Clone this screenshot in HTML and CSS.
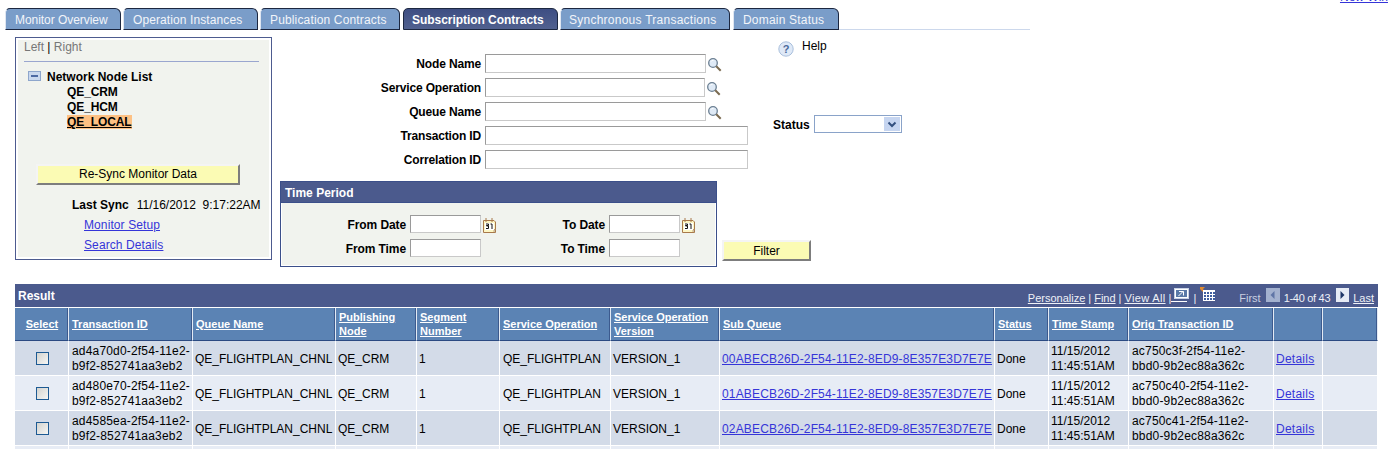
FILE: index.html
```html
<!DOCTYPE html>
<html lang="en">
<head>
<meta charset="utf-8">
<title>Subscription Contracts</title>
<link rel="stylesheet" href="styles.css">
</head>
<body>
<svg class="defs" width="0" height="0" aria-hidden="true">
  <symbol id="lens" viewBox="0 0 15 15">
    <circle cx="6" cy="6" r="4.3" fill="#dfeaf6" stroke="#6b7f92" stroke-width="1.3"/>
    <path d="M4 4.6a2.6 2.6 0 0 1 2.6-1.4" fill="none" stroke="#fff" stroke-width="1"/>
    <path d="M9.3 9.3l4.4 4.4" stroke="#7a6a50" stroke-width="2"/>
  </symbol>
  <symbol id="cal" viewBox="0 0 13 15">
    <path d="M.5 2.5h10.5l1.5 1.5v10.500h-12z" fill="#fdf6c4" stroke="#a8794a"/>
    <path d="M11 14.500v-3h1.500" fill="#ccc" stroke="#a8794a" stroke-width=".6"/>
    <path d="M3 0v4M9 0v4" stroke="#a8794a"/>
    <rect x="2" y="5" width="9" height="7" fill="#fff"/>
    <path d="M3 6h2.500v1.500h-2v.5h2v2.500h-2.500M7.500 6h1.500v5" fill="none" stroke="#111"/>
  </symbol>
</svg>

<div class="topbar"><a class="link" href="#">New Window</a></div>

<nav class="tabs">
  <a class="tab tab-1" href="#">Monitor Overview</a>
  <a class="tab tab-2" href="#">Operation Instances</a>
  <a class="tab tab-3" href="#">Publication Contracts</a>
  <a class="tab tab-4 tab-active" href="#">Subscription Contracts</a>
  <a class="tab tab-5" href="#">Synchronous Transactions</a>
  <a class="tab tab-6" href="#">Domain Status</a>
  <span class="tab-rest"></span>
</nav>

<section class="top">
  <aside class="panel">
    <div class="side-switch">Left <span class="pipe">|</span> Right</div>
    <div class="tree-head">
      <svg class="minus" width="13" height="10" viewBox="0 0 13 10"><rect x=".5" y=".5" width="12" height="9" fill="#c9d8ee" stroke="#8ea6cc"/><rect x="3" y="4" width="7" height="2" fill="#4d6aa3"/></svg>
      <b>Network Node List</b>
    </div>
    <ul class="nodes">
      <li>QE_CRM</li>
      <li>QE_HCM</li>
      <li><span class="node-current">QE_LOCAL</span></li>
    </ul>
    <button class="btn btn-sync" type="button">Re-Sync Monitor Data</button>
    <div class="last-sync"><b>Last Sync</b><span>11/16/2012&nbsp; 9:17:22AM</span></div>
    <a class="link panel-link" href="#">Monitor Setup</a>
    <a class="link panel-link" href="#">Search Details</a>
  </aside>

  <div class="main">
    <div class="upper">
      <div class="fields">
        <div class="field"><label>Node Name</label><input class="in-mid" type="text"><svg class="lens"><use href="#lens"/></svg></div>
        <div class="field"><label>Service Operation</label><input class="in-mid-s" type="text"><svg class="lens"><use href="#lens"/></svg></div>
        <div class="field"><label>Queue Name</label><input class="in-mid" type="text"><svg class="lens"><use href="#lens"/></svg></div>
        <div class="field"><label>Transaction ID</label><input class="in-long" type="text"></div>
        <div class="field"><label>Correlation ID</label><input class="in-long" type="text"></div>
      </div>
      <div class="side">
        <div class="help">
          <svg width="16" height="17" viewBox="0 0 16 17"><circle cx="8" cy="9" r="7.200" fill="#dfe9f7" stroke="#a9bfdc"/><text x="8" y="13" class="help-mark">?</text></svg>
          <span>Help</span>
        </div>
        <div class="status">
          <b>Status</b>
          <span class="select"><span class="select-btn"><svg width="10" height="7" viewBox="0 0 10 7"><path d="M1.500 1.500l3.500 3.500 3.500-3.500" fill="none" stroke="#33507f" stroke-width="2"/></svg></span></span>
        </div>
      </div>
    </div>
    <div class="lower">
      <div class="timebox">
        <div class="timebox-title">Time Period</div>
        <div class="time-rows">
          <div class="time-row">
            <div class="tf tf-a"><label>From Date</label><input type="text"><svg class="cal"><use href="#cal"/></svg></div>
            <div class="tf tf-b"><label>To Date</label><input type="text"><svg class="cal"><use href="#cal"/></svg></div>
          </div>
          <div class="time-row">
            <div class="tf tf-a"><label>From Time</label><input type="text"></div>
            <div class="tf tf-b"><label>To Time</label><input type="text"></div>
          </div>
        </div>
      </div>
      <button class="btn btn-filter" type="button">Filter</button>
    </div>
  </div>
</section>

<section class="grid">
  <div class="grid-title">
    <b>Result</b>
    <div class="grid-nav">
      <a href="#">Personalize</a><i>|</i><a href="#">Find</a><i>|</i><a class="view-all" href="#">View All</a><i class="tight">|</i>
      <svg class="ic-zoom" width="18" height="14" viewBox="0 0 18 14"><rect x="3.500" y=".5" width="14" height="10" fill="#fff" stroke="#c8d2e6"/><rect x="5" y="2" width="11" height="7" fill="#5b7aa8"/><path d="M8 3.500h4.500v4M12 3.500l-4.500 4.500" stroke="#fff" fill="none"/><path d="M0 13.500h16" stroke="#fff"/></svg>
      <i class="wide">|</i>
      <svg class="ic-grid" width="15" height="15" viewBox="0 0 15 15"><path d="M0 0l5 0-2 2 2 3-2 0-3-3z" fill="#e08a30"/><rect x="3" y="3" width="12" height="11" fill="#fff"/><path d="M4 5h2v2h-2zM7 5h2v2h-2zM10 5h2v2h-2zM13 5h2v2h-2zM4 8h2v2h-2zM7 8h2v2h-2zM10 8h2v2h-2zM13 8h2v2h-2zM4 11h2v2h-2zM7 11h2v2h-2zM10 11h2v2h-2zM13 11h2v2h-2z" fill="#3f5fa0"/></svg>
      <span class="first">First</span>
      <svg class="ic-nav" width="14" height="14" viewBox="0 0 14 14"><rect width="14" height="14" fill="#a3b1cf"/><path d="M8.500 3v8l-4-4z" fill="#5f75a6"/></svg>
      <span class="count">1-40 of 43</span>
      <svg class="ic-nav ic-next" width="13" height="14" viewBox="0 0 13 14"><rect width="13" height="14" fill="#e6ebf5"/><path d="M4.500 3v8l4-4z" fill="#1f3768"/></svg>
      <a href="#">Last</a>
    </div>
  </div>
  <table class="results">
    <colgroup>
      <col class="c1"><col class="c2"><col class="c3"><col class="c4"><col class="c5"><col class="c6"><col class="c7"><col class="c8"><col class="c9"><col class="c10"><col class="c11"><col class="c12"><col class="c13">
    </colgroup>
    <thead>
      <tr>
        <th class="th-center"><a href="#">Select</a></th>
        <th><a href="#">Transaction ID</a></th>
        <th><a href="#">Queue Name</a></th>
        <th><a href="#">Publishing<br>Node</a></th>
        <th><a href="#">Segment<br>Number</a></th>
        <th><a href="#">Service Operation</a></th>
        <th><a href="#">Service Operation<br>Version</a></th>
        <th><a href="#">Sub Queue</a></th>
        <th><a href="#">Status</a></th>
        <th><a href="#">Time Stamp</a></th>
        <th><a href="#">Orig Transaction ID</a></th>
        <th></th>
        <th></th>
      </tr>
    </thead>
    <tbody>
      <tr>
        <td class="td-center"><span class="check"></span></td>
        <td class="id">ad4a70d0-2f54-11e2-<br>b9f2-852741aa3eb2</td>
        <td>QE_FLIGHTPLAN_CHNL</td>
        <td>QE_CRM</td>
        <td>1</td>
        <td class="op">QE_FLIGHTPLAN</td>
        <td>VERSION_1</td>
        <td class="sub"><a class="link" href="#">00ABECB26D-2F54-11E2-8ED9-8E357E3D7E7E</a></td>
        <td>Done</td>
        <td>11/15/2012<br>11:45:51AM</td>
        <td class="id">ac750c3f-2f54-11e2-<br>bbd0-9b2ec88a362c</td>
        <td class="det"><a class="link" href="#">Details</a></td>
        <td></td>
      </tr>
      <tr class="alt">
        <td class="td-center"><span class="check"></span></td>
        <td class="id">ad480e70-2f54-11e2-<br>b9f2-852741aa3eb2</td>
        <td>QE_FLIGHTPLAN_CHNL</td>
        <td>QE_CRM</td>
        <td>1</td>
        <td class="op">QE_FLIGHTPLAN</td>
        <td>VERSION_1</td>
        <td class="sub"><a class="link" href="#">01ABECB26D-2F54-11E2-8ED9-8E357E3D7E7E</a></td>
        <td>Done</td>
        <td>11/15/2012<br>11:45:51AM</td>
        <td class="id">ac750c40-2f54-11e2-<br>bbd0-9b2ec88a362c</td>
        <td class="det"><a class="link" href="#">Details</a></td>
        <td></td>
      </tr>
      <tr>
        <td class="td-center"><span class="check"></span></td>
        <td class="id">ad4585ea-2f54-11e2-<br>b9f2-852741aa3eb2</td>
        <td>QE_FLIGHTPLAN_CHNL</td>
        <td>QE_CRM</td>
        <td>1</td>
        <td class="op">QE_FLIGHTPLAN</td>
        <td>VERSION_1</td>
        <td class="sub"><a class="link" href="#">02ABECB26D-2F54-11E2-8ED9-8E357E3D7E7E</a></td>
        <td>Done</td>
        <td>11/15/2012<br>11:45:51AM</td>
        <td class="id">ac750c41-2f54-11e2-<br>bbd0-9b2ec88a362c</td>
        <td class="det"><a class="link" href="#">Details</a></td>
        <td></td>
      </tr>
      <tr class="alt">
        <td></td><td></td><td></td><td></td><td></td><td></td><td></td><td></td><td></td><td></td><td></td><td></td><td></td>
      </tr>
    </tbody>
  </table>
</section>
</body>
</html>
```
FILE: styles.css
```css
html, body { margin: 0; padding: 0; height: 449px; overflow: hidden; background: #fff; }
body { font: 12px/15px "Liberation Sans", Arial, sans-serif; color: #000; }
.defs { display: block; height: 0; }
a { color: inherit; }
.link { color: #3535d8; text-decoration: underline; }

.topbar { height: 3px; overflow: hidden; display: flex; justify-content: flex-end; align-items: flex-end; }
.topbar .link { flex: none; margin-right: -22px; line-height: 11px; }

.tabs { display: flex; align-items: flex-end; margin: 5px 0 0 5px; width: 1025px; height: 22px; }
.tab { flex: none; box-sizing: border-box; height: 22px; padding: 3px 0 0 9px; background: #7a9dc9; color: #f2f5fa; text-decoration: none; white-space: nowrap; border: 1px solid #1c2740; border-left-color: #dfe6f1; border-radius: 5px 6px 0 0; line-height: 17px; }
.tab-1 { width: 116px; margin-right: 2px; letter-spacing: -.05px; }
.tab-2 { width: 135px; margin-right: 2px; letter-spacing: .1px; }
.tab-3 { width: 140px; margin-right: 3px; letter-spacing: .15px; }
.tab-4 { width: 155px; margin-right: 2px; padding-left: 8px; letter-spacing: -.05px; }
.tab-5 { width: 170px; margin-right: 3px; padding-left: 8px; letter-spacing: .25px; }
.tab-6 { width: 106px; letter-spacing: .2px; }
.tab-active { background: linear-gradient(#3e4e83, #51618f); color: #fff; font-weight: bold; border-left-color: #1c2740; }
.tab-rest { flex: 1; border-bottom: 1px solid #ccd8ec; }

.top { display: flex; align-items: flex-start; margin: 7px 0 0 15px; }
.panel { box-sizing: border-box; width: 257px; height: 223px; padding: 0 12px 0 8px; background: #f1f3ee; border: 1px solid #4d5b8f; box-shadow: inset 0 0 0 2px #fff; display: flex; flex-direction: column; }
.side-switch { color: #777; height: 24px; line-height: 19px; box-sizing: border-box; border-bottom: 1px solid #9aa6cf; }
.pipe { color: #000; }
.tree-head { display: flex; align-items: center; gap: 6px; margin: 8px 0 0 4px; height: 15px; }
.minus { flex: none; margin-top: -4px; }
.nodes { list-style: none; margin: 0 0 0 43px; padding: 0; font-weight: bold; letter-spacing: -.1px; }
.nodes li { height: 15px; }
.node-current { background: #fdc184; text-decoration: underline; }
.btn { display: block; box-sizing: border-box; margin: 0; padding: 2px 0 0; font: 12px/15px "Liberation Sans", Arial, sans-serif; color: #000; background: #fbfbb4; border: 2px solid; border-color: #f4f4f4 #7d7d7d #7d7d7d #f4f4f4; }
.btn-sync { width: 204px; height: 21px; margin: 34px 0 0 12px; padding-top: 0; }
.last-sync { display: flex; gap: 8px; margin: 13px 0 0 48px; height: 15px; white-space: nowrap; }
.panel-link { display: block; margin: 5px 0 0 60px; height: 15px; letter-spacing: .1px; }

.main { margin-left: 8px; }
.upper { display: flex; align-items: flex-start; }
.fields { box-sizing: border-box; width: 468px; padding-top: 17px; display: flex; flex-direction: column; gap: 5px; }
.field { display: flex; align-items: center; height: 19px; }
.field label { flex: none; box-sizing: border-box; width: 201px; margin-right: 4px; padding-top: 2px; text-align: right; font-weight: bold; letter-spacing: -.15px; }
input { box-sizing: border-box; margin: 0; padding: 0 2px; height: 19px; background: #fff; border: 1px solid; border-color: #9a9a9a #c9c9c9 #c9c9c9 #9a9a9a; }
.in-mid { width: 221px; }
.in-mid-s { width: 220px; }
.in-long { width: 263px; }
.lens { flex: none; width: 15px; height: 15px; margin: 2px 0 0 1px; }

.side { margin-left: 25px; display: flex; flex-direction: column; }
.help { display: flex; gap: 8px; margin: 3px 0 0 5px; height: 17px; }
.help span { margin-top: -1px; }
.help-mark { font: bold 11px "Liberation Sans", sans-serif; fill: #4a6a9c; text-anchor: middle; }
.status { display: flex; align-items: center; gap: 4px; margin-top: 58px; }
.status b { padding-top: 2px; }
.select { box-sizing: border-box; width: 88px; height: 18px; border: 1px solid #8aa3c9; background: #fff; display: flex; justify-content: flex-end; padding: 1px; }
.select-btn { width: 16px; background: #c6d5f0; display: flex; align-items: center; justify-content: center; }

.lower { display: flex; align-items: flex-start; margin-top: 12px; }
.timebox { box-sizing: border-box; width: 437px; height: 86px; border: 1px solid #3b4f8a; background: #f1f3ee; box-shadow: inset 0 0 0 1px #fff; }
.timebox-title { height: 21px; box-sizing: border-box; background: #4b5a8d; border-bottom: 1px solid #3b4f8a; color: #fff; font-weight: bold; line-height: 22px; padding-left: 4px; }
.time-rows { padding-top: 12px; display: flex; flex-direction: column; gap: 6px; }
.time-row { display: flex; }
.tf { display: flex; align-items: center; height: 18px; }
.tf label { flex: none; box-sizing: border-box; margin-right: 4px; padding-top: 2px; text-align: right; font-weight: bold; letter-spacing: -.1px; }
.tf input { width: 71px; height: 18px; }
.tf-a { width: 215px; }
.tf-a label { width: 125px; }
.tf-b label { width: 109px; }
.cal { flex: none; width: 13px; height: 15px; margin: 2px 0 0 2px; }
.btn-filter { width: 89px; height: 21px; margin: 59px 0 0 5px; }

.grid { margin: 17px 10px 0 15px; }
.grid-title { display: flex; justify-content: space-between; align-items: center; height: 23px; box-sizing: border-box; padding: 0 4px 0 3px; background: #4b5a8d; color: #fff; }
.grid-title b { line-height: 23px; padding-top: 1px; }
.grid-nav { display: flex; align-items: center; font-size: 11px; color: #eef1f7; height: 23px; padding-top: 6px; box-sizing: border-box; white-space: nowrap; }
.grid-nav i { font-style: normal; margin: 0 3px; }
.grid-nav i.tight { margin: 0 0 0 3px; }
.grid-nav i.wide { margin: 0 4px; }
.grid-nav svg { margin-top: -8px; flex: none; }
.view-all { letter-spacing: .35px; }
.first { margin-left: 24px; color: #c9d0e0; }
.ic-nav { margin: 0 4px 0 5px; }
.ic-next { margin: 0 4px 0 6px; }
.count { color: #eef1f7; letter-spacing: -.3px; }

.results { table-layout: fixed; width: 1363px; border-collapse: separate; border-spacing: 0; margin-top: 1px; }
.c1 { width: 54px; } .c2 { width: 124px; } .c3 { width: 143px; } .c4 { width: 81px; } .c5 { width: 83px; } .c6 { width: 111px; } .c7 { width: 109px; } .c8 { width: 275px; } .c9 { width: 54px; } .c10 { width: 80px; } .c11 { width: 145px; } .c12 { width: 49px; } .c13 { width: 55px; }
.results th { height: 33px; box-sizing: border-box; padding: 0 2px 0 3px; background: #5b83b4; color: #fff; font-size: 11px; line-height: 14px; font-weight: bold; text-align: left; vertical-align: middle; border-bottom: 1px solid #2b4a82; border-right: 1px solid #e3eaf4; box-shadow: inset -1px 0 0 #3c5a8e; }
.results th.th-center { text-align: center; }
.results td { height: 35px; box-sizing: border-box; padding: 2px 1px 0 2px; background: #d3dbe8; line-height: 15px; border-right: 1px solid #fff; border-bottom: 1px solid #fff; vertical-align: middle; white-space: nowrap; }
.results .alt td { background: #e7ecf5; }
.results td.td-center { text-align: center; padding-top: 0; }
.results td.id { padding-left: 3px; letter-spacing: .18px; }
.results td.op { padding-left: 3px; }
.results td.sub { letter-spacing: .16px; }
.results td.det { letter-spacing: .25px; }
.check { display: inline-block; box-sizing: border-box; width: 13px; height: 13px; vertical-align: middle; border: 1px solid #1d5a93; background: linear-gradient(135deg, #d3d3cf, #f6f6f4); }
```
